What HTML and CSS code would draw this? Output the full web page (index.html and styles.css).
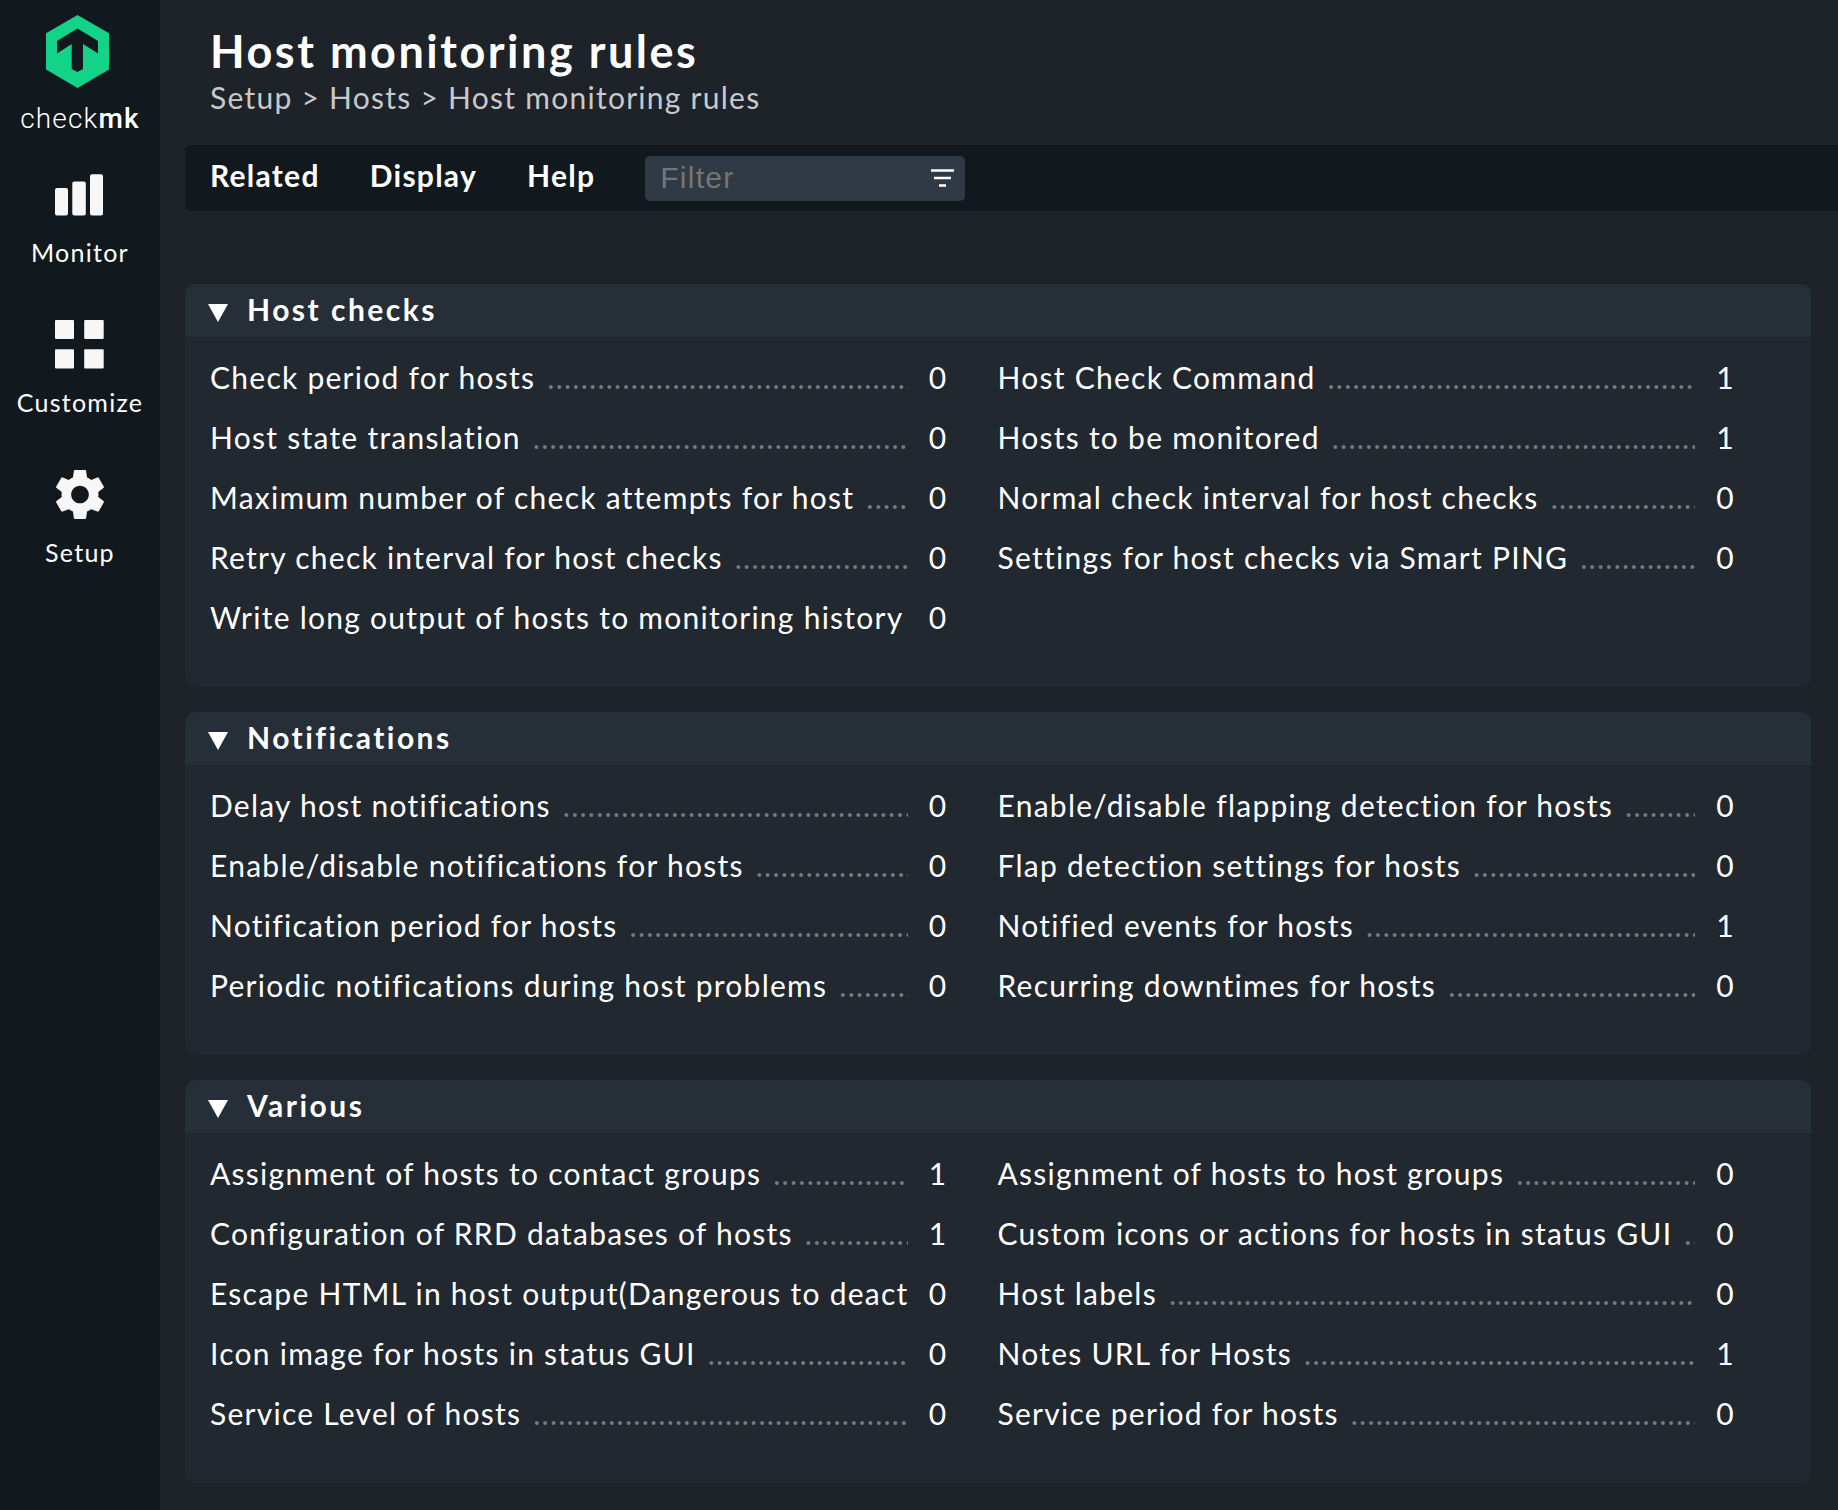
FILE: index.html
```html
<!DOCTYPE html>
<html lang="en">
<head>
<meta charset="utf-8">
<title>Host monitoring rules</title>
<link rel="stylesheet" href="styles.css">
</head>
<body>
<aside class="sidebar">
  <a class="logo" href="#">
    <svg class="logo-mark" viewBox="46 15 63 73" aria-hidden="true"><path fill="#13d389" fill-rule="evenodd" d="M77.500 15L109 33.200V69.600L77.500 88L46 69.600V33.200ZM77.500 28.400L57 41V53.400L71.700 44V69L77.500 72L83 69V44L98 53.400V41Z"/></svg>
    <span class="logo-text">check<b>mk</b></span>
  </a>
  <nav class="nav">
    <a class="nav-item" href="#">
      <svg class="nav-icon" viewBox="0 0 60 60" aria-hidden="true"><rect x="5" y="23" width="13" height="27.500" rx="2"/><rect x="22.300" y="16.500" width="13.500" height="34" rx="2"/><rect x="40" y="9.300" width="13" height="41.300" rx="2"/></svg>
      <span>Monitor</span>
    </a>
    <a class="nav-item" href="#">
      <svg class="nav-icon" viewBox="0 0 60 60" aria-hidden="true"><rect x="5" y="5" width="19" height="19" rx="1"/><rect x="34.200" y="5" width="19.500" height="19" rx="1"/><rect x="5" y="34.200" width="19" height="19.300" rx="1"/><rect x="34.200" y="34.200" width="19.500" height="19.300" rx="1"/></svg>
      <span>Customize</span>
    </a>
    <a class="nav-item" href="#">
      <svg class="nav-icon" viewBox="-0.2 0 24.400 24.400" aria-hidden="true"><path d="M19.430 12.980c.04-.32.07-.64.07-.98s-.03-.66-.07-.98l2.110-1.650c.19-.15.24-.42.12-.64l-2-3.460c-.12-.22-.39-.3-.61-.22l-2.490 1c-.52-.4-1.080-.73-1.690-.98l-.38-2.650C14.460 2.180 14.250 2 14 2h-4c-.25 0-.46.18-.49.42l-.38 2.650c-.61.25-1.170.59-1.690.98l-2.490-1c-.23-.09-.49 0-.61.22l-2 3.460c-.13.22-.07.49.12.64l2.110 1.650c-.04.32-.07.65-.07.98s.03.66.07.98l-2.110 1.650c-.19.15-.24.42-.12.64l2 3.460c.12.22.39.3.61.22l2.490-1c.52.4 1.080.73 1.690.98l.38 2.650c.03.24.24.42.49.42h4c.25 0 .46-.18.49-.42l.38-2.650c.61-.25 1.170-.59 1.690-.98l2.490 1c.23.09.49 0 .61-.22l2-3.460c.12-.22.07-.49-.12-.64l-2.110-1.650zM12 15.600c-1.980 0-3.600-1.620-3.600-3.600s1.620-3.600 3.600-3.600 3.600 1.620 3.600 3.600-1.620 3.600-3.600 3.600z"/></svg>
      <span>Setup</span>
    </a>
  </nav>
</aside>
<main class="main">
  <header class="page-head">
    <h1>Host monitoring rules</h1>
    <nav class="crumbs"><a href="#">Setup</a> &gt; <a href="#">Hosts</a> &gt; <a href="#">Host monitoring rules</a></nav>
  </header>
  <div class="menubar">
    <button class="menu" type="button">Related</button>
    <button class="menu" type="button">Display</button>
    <button class="menu" type="button">Help</button>
    <form class="filter">
      <input class="filter-input" type="text" placeholder="Filter" aria-label="Filter">
      <button class="filter-button" type="button" aria-label="Apply filter"><svg viewBox="0 0 23 18" width="23" height="18" aria-hidden="true"><path d="M0 1.500H23M3 9H20M8 16.500H15" stroke="#fff" stroke-width="2.400"/></svg></button>
    </form>
  </div>
  <div class="panels">
    <section class="panel">
      <h2><button class="panel-head" type="button"><svg class="caret" viewBox="0 0 20 18" aria-hidden="true"><path d="M0 0H20L10 18Z"/></svg>Host checks</button></h2>
      <ul class="rules">
        <li><a href="#">Check period for hosts</a><span>0</span></li>
        <li><a href="#">Host Check Command</a><span>1</span></li>
        <li><a href="#">Host state translation</a><span>0</span></li>
        <li><a href="#">Hosts to be monitored</a><span>1</span></li>
        <li><a href="#">Maximum number of check attempts for host</a><span>0</span></li>
        <li><a href="#">Normal check interval for host checks</a><span>0</span></li>
        <li><a href="#">Retry check interval for host checks</a><span>0</span></li>
        <li><a href="#">Settings for host checks via Smart PING</a><span>0</span></li>
        <li><a href="#">Write long output of hosts to monitoring history</a><span>0</span></li>
      </ul>
    </section>
    <section class="panel">
      <h2><button class="panel-head" type="button"><svg class="caret" viewBox="0 0 20 18" aria-hidden="true"><path d="M0 0H20L10 18Z"/></svg>Notifications</button></h2>
      <ul class="rules">
        <li><a href="#">Delay host notifications</a><span>0</span></li>
        <li><a href="#">Enable/disable flapping detection for hosts</a><span>0</span></li>
        <li><a href="#">Enable/disable notifications for hosts</a><span>0</span></li>
        <li><a href="#">Flap detection settings for hosts</a><span>0</span></li>
        <li><a href="#">Notification period for hosts</a><span>0</span></li>
        <li><a href="#">Notified events for hosts</a><span>1</span></li>
        <li><a href="#">Periodic notifications during host problems</a><span>0</span></li>
        <li><a href="#">Recurring downtimes for hosts</a><span>0</span></li>
      </ul>
    </section>
    <section class="panel">
      <h2><button class="panel-head" type="button"><svg class="caret" viewBox="0 0 20 18" aria-hidden="true"><path d="M0 0H20L10 18Z"/></svg>Various</button></h2>
      <ul class="rules">
        <li><a href="#">Assignment of hosts to contact groups</a><span>1</span></li>
        <li><a href="#">Assignment of hosts to host groups</a><span>0</span></li>
        <li><a href="#">Configuration of RRD databases of hosts</a><span>1</span></li>
        <li><a href="#">Custom icons or actions for hosts in status GUI</a><span>0</span></li>
        <li><a href="#">Escape HTML in host output(Dangerous to deact</a><span>0</span></li>
        <li><a href="#">Host labels</a><span>0</span></li>
        <li><a href="#">Icon image for hosts in status GUI</a><span>0</span></li>
        <li><a href="#">Notes URL for Hosts</a><span>1</span></li>
        <li><a href="#">Service Level of hosts</a><span>0</span></li>
        <li><a href="#">Service period for hosts</a><span>0</span></li>
      </ul>
    </section>
  </div>
</main>
</body>
</html>
```
FILE: styles.css
```css
* { box-sizing: border-box; }
body {
  margin: 0;
  min-height: 100vh;
  display: flex;
  background: #1e2229;
  color: #fff;
  font: 30px/36px Lato, sans-serif;
  letter-spacing: 0.042em;
}
a { color: inherit; text-decoration: none; }
h1, h2, ul { margin: 0; padding: 0; }
button {
  border: 0;
  padding: 0;
  background: none;
  color: inherit;
  font: inherit;
  letter-spacing: inherit;
  cursor: pointer;
}
.sidebar { flex: none; width: 160px; background: #11181e; }
.logo {
  display: flex;
  flex-direction: column;
  align-items: center;
  height: 150px;
  padding-top: 15px;
}
.logo-mark { width: 63px; height: 73px; margin-right: 5px; }
.logo-text {
  margin-top: 13px;
  font: 300 28px/36px Roboto, sans-serif;
  letter-spacing: 0.042em;
}
.logo-text b { font-weight: 500; }
.nav-item {
  display: flex;
  flex-direction: column;
  align-items: center;
  gap: 12px;
  height: 150px;
  padding-top: 15px;
  font-size: 25px;
  line-height: 30px;
  letter-spacing: 0.05em;
}
.nav-icon { width: 60px; height: 60px; fill: #f7f7f7; }
.main { flex: 1; min-width: 0; padding-left: 25px; }
.page-head { padding: 24px 25px 30px; }
h1 {
  margin-bottom: 1px;
  font-size: 45px;
  line-height: 54px;
  letter-spacing: 0.056em;
}
.crumbs { color: #c8c9cb; }
.menubar {
  display: flex;
  align-items: center;
  height: 66px;
  background: #11181e;
  border-radius: 5px 0 0 5px;
}
.menu { height: 66px; padding: 0 25px 6px; font-weight: 700; }
.filter {
  display: flex;
  align-items: center;
  width: 320px;
  height: 45px;
  margin-left: 25px;
  padding: 0 11px 0 15px;
  background: #303946;
  border-radius: 5px;
}
.filter-input {
  flex: 1;
  min-width: 0;
  border: 0;
  padding: 0;
  background: none;
  color: #fff;
  font: 30px/36px "Liberation Sans", sans-serif;
  letter-spacing: inherit;
  outline: 0;
}
.filter-input::placeholder { color: #757575; }
.filter-button { display: flex; }
.panels {
  display: flex;
  flex-direction: column;
  gap: 25px;
  padding: 73px 27px 25px 0;
}
.panel { background: #21282f; border-radius: 10px; overflow: hidden; }
.panel-head {
  display: flex;
  align-items: center;
  gap: 19px;
  width: 100%;
  padding: 7px 23px 10px;
  background: #262e37;
  font-size: 30px;
  line-height: 36px;
  font-weight: 700;
  letter-spacing: 0.083em;
}
h2 { font-size: 30px; }
.caret { width: 20px; height: 18px; margin-top: 8px; fill: #fff; }
.rules {
  display: grid;
  grid-template-columns: repeat(2, minmax(0, 1fr));
  padding: 10px 26px 40px 25px;
  list-style: none;
}
.rules li {
  display: flex;
  gap: 21px;
  padding-right: 50px;
  line-height: 60px;
}
.rules a {
  flex: 1;
  min-width: 0;
  overflow: hidden;
  white-space: nowrap;
}
.rules a::after {
  content: "....................................................................................................";
  margin-left: 12px;
  color: #777b7b;
}
```
